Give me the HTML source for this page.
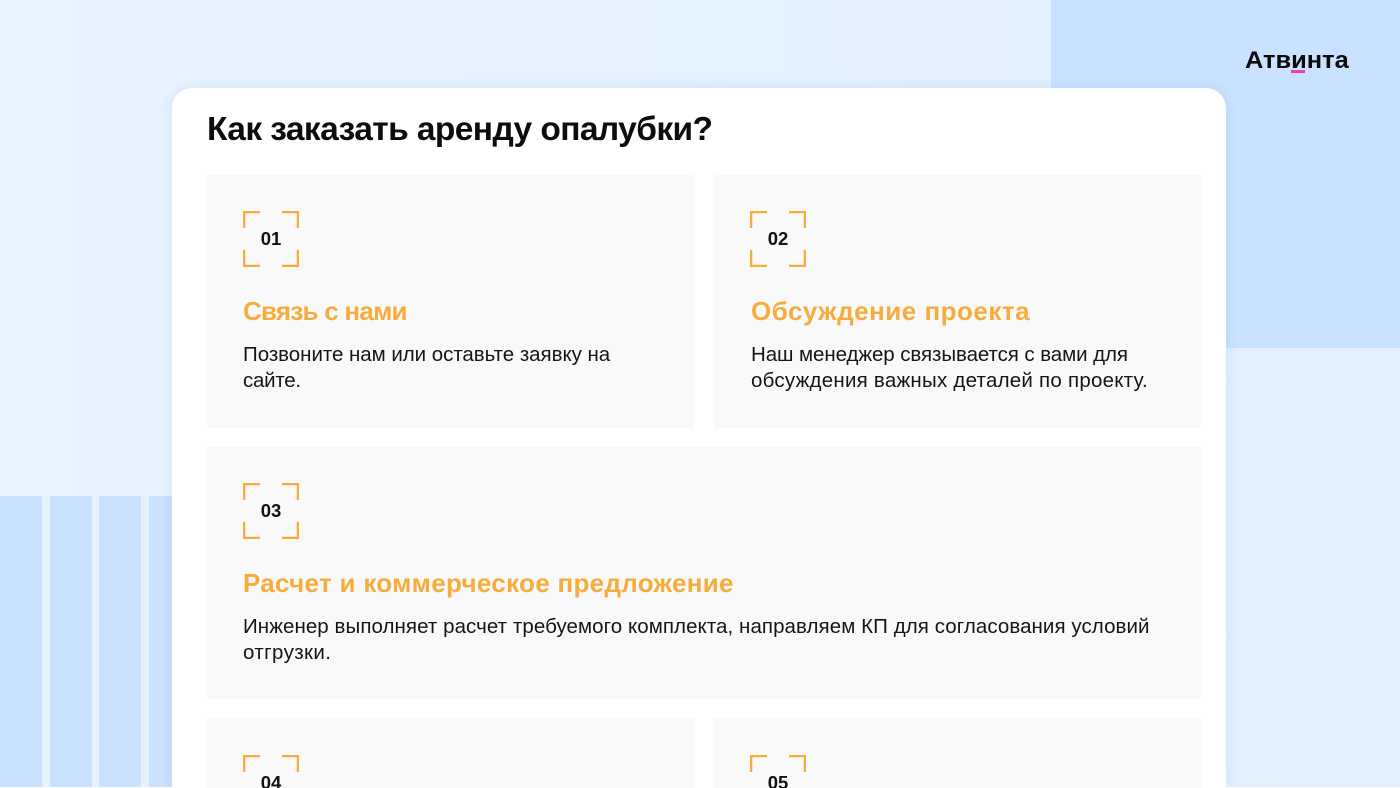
<!DOCTYPE html>
<html lang="ru">
<head>
<meta charset="utf-8">
<title>Как заказать аренду опалубки?</title>
<style>
html,body{margin:0;padding:0;width:1400px;height:788px;overflow:hidden;background:#fff}
#root{position:absolute;left:0;top:0;width:1400px;height:788px;overflow:hidden;background:#fff;font-family:"Liberation Sans",sans-serif;color:#111}
#bg{position:absolute;left:0;top:0;width:1400px;height:787px;background:linear-gradient(90deg,#e7f3fe 0,#e2effe 100%);overflow:hidden}
.b{position:absolute;background:#c9e2ff}
#card{position:absolute;left:172px;top:88px;width:1054px;height:700px;background:#fff;border-radius:20px 20px 0 0;box-shadow:0 0 12px rgba(120,170,230,.22)}
.cell{position:absolute;background:#f9f9f9}
.t{position:absolute;white-space:nowrap;line-height:26px}
.h{font-size:33.5px;font-weight:bold;line-height:40px;color:#0d0d0d;letter-spacing:-.58px}
.n{font-size:18.5px;font-weight:bold;line-height:20px;width:56px;text-align:center;color:#111}
.o{font-size:26px;font-weight:bold;line-height:30px;color:#f8ac3d}
.p{font-size:20.5px;color:#151515}
svg{position:absolute;overflow:hidden}
</style>
</head>
<body>
<div id="root">
<div id="bg">
  <div class="b" style="left:1051px;top:0;width:349px;height:348px"></div>
  <div class="b" style="left:0;top:496px;width:42px;height:292px"></div>
  <div class="b" style="left:50px;top:496px;width:42px;height:292px"></div>
  <div class="b" style="left:99px;top:496px;width:42px;height:292px"></div>
  <div class="b" style="left:149px;top:496px;width:42px;height:292px"></div>
</div>

<div class="t" style="left:1245px;top:47px;font-size:24px;line-height:28px;font-weight:bold;color:#0a0a0a;transform:scaleX(1.06);transform-origin:left center">Атвинта</div>
<div style="position:absolute;left:1291px;top:70px;width:14px;height:3px;background:#f23fb0"></div>

<div id="card"></div>
<div class="t h" style="left:207px;top:110px">Как заказать аренду опалубки?</div>

<div class="cell" style="left:207px;top:175px;width:487px;height:253px"></div>
<div class="cell" style="left:714px;top:175px;width:487px;height:253px"></div>
<div class="cell" style="left:207px;top:447px;width:994px;height:252px"></div>
<div class="cell" style="left:207px;top:718px;width:487px;height:70px"></div>
<div class="cell" style="left:714px;top:718px;width:487px;height:70px"></div>

<svg style="left:243px;top:211px" width="56" height="56" fill="none" stroke="#f8ac3d" stroke-width="2.3"><path d="M1.15 17V1.15H17M39 1.15H54.85V17M1.15 39V54.85H17M39 54.85H54.85V39"/></svg>
<div class="t n" style="left:243px;top:229px">01</div>
<div class="t o" style="left:243px;top:296px;letter-spacing:-.75px">Связь с нами</div>
<div class="t p" style="left:243px;top:342px;letter-spacing:-.04px">Позвоните нам или оставьте заявку на</div>
<div class="t p" style="left:243px;top:368px;letter-spacing:-.25px">сайте.</div>

<svg style="left:750px;top:211px" width="56" height="56" fill="none" stroke="#f8ac3d" stroke-width="2.3"><path d="M1.15 17V1.15H17M39 1.15H54.85V17M1.15 39V54.85H17M39 54.85H54.85V39"/></svg>
<div class="t n" style="left:750px;top:229px">02</div>
<div class="t o" style="left:751px;top:296px;letter-spacing:.5px">Обсуждение проекта</div>
<div class="t p" style="left:751px;top:342px;letter-spacing:-.08px">Наш менеджер связывается с вами для</div>
<div class="t p" style="left:751px;top:368px;letter-spacing:.24px">обсуждения важных деталей по проекту.</div>

<svg style="left:243px;top:483px" width="56" height="56" fill="none" stroke="#f8ac3d" stroke-width="2.3"><path d="M1.15 17V1.15H17M39 1.15H54.85V17M1.15 39V54.85H17M39 54.85H54.85V39"/></svg>
<div class="t n" style="left:243px;top:501px">03</div>
<div class="t o" style="left:243px;top:568px;letter-spacing:.3px">Расчет и коммерческое предложение</div>
<div class="t p" style="left:243px;top:614px;letter-spacing:.07px">Инженер выполняет расчет требуемого комплекта, направляем КП для согласования условий</div>
<div class="t p" style="left:243px;top:640px;letter-spacing:.4px">отгрузки.</div>

<svg style="left:243px;top:755px" width="56" height="33" fill="none" stroke="#f8ac3d" stroke-width="2.3"><path d="M1.15 17V1.15H17M39 1.15H54.85V17"/></svg>
<div class="t n" style="left:243px;top:773px">04</div>

<svg style="left:750px;top:755px" width="56" height="33" fill="none" stroke="#f8ac3d" stroke-width="2.3"><path d="M1.15 17V1.15H17M39 1.15H54.85V17"/></svg>
<div class="t n" style="left:750px;top:773px">05</div>
</div>
</body>
</html>
